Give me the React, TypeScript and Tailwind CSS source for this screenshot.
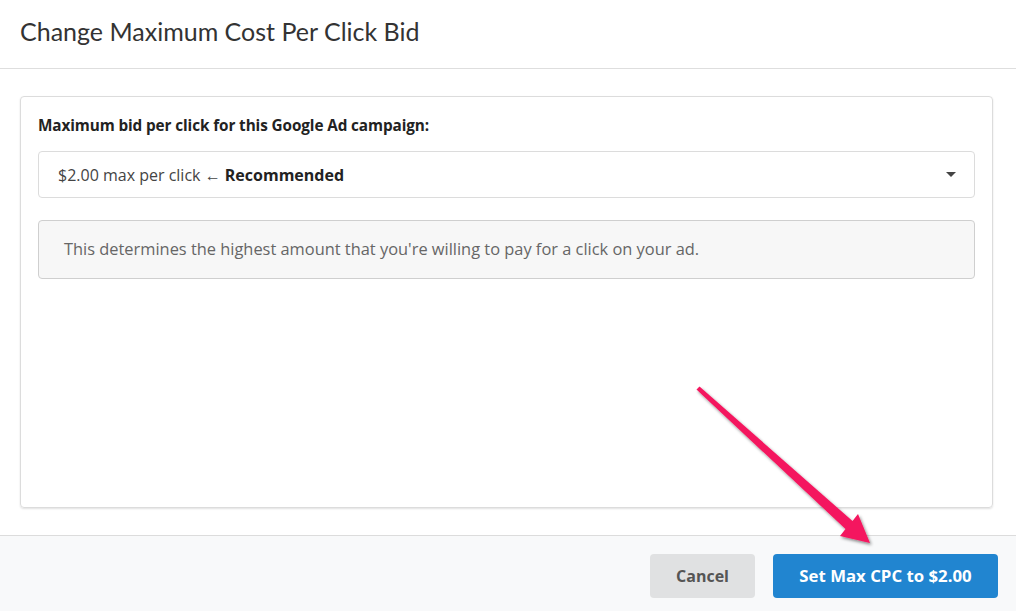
import React from "react";

export default function App() {
  return (
    <div className="relative w-[1016px] h-[611px] overflow-hidden bg-white flex flex-col" style={{ fontFamily: '"Open Sans", "Liberation Sans", sans-serif' }}>
      <div className="h-[69px] shrink-0 border-b border-[#dedede] flex items-center px-5 pb-[5px]">
        <h1 className="text-[25px] text-[#333] font-normal leading-none" style={{ fontFamily: 'Lato, "Liberation Sans", sans-serif' }}>
          Change Maximum Cost Per Click Bid
        </h1>
      </div>
      <div className="flex-1 pt-[27px] pb-[27px] pl-5 pr-[23px] flex">
        <div className="flex-1 border border-[#dcdcdc] rounded-[4px] shadow-[0_1px_2px_rgba(0,0,0,0.12)] px-[17px] pt-[18px]">
          <div className="text-[15.3px] font-bold text-[#222] leading-[20px] tracking-[-0.1px]">
            Maximum bid per click for this Google Ad campaign:
          </div>
          <div className="mt-[16px] h-[47px] border border-[#dcdcdc] rounded-[4px] flex items-center pl-[19px] pr-[18px]">
            <span className="text-[16px] text-[#444]">
              $2.00 max per click ← <span className="font-bold text-[#222]">Recommended</span>
            </span>
            <span className="ml-auto w-0 h-0 border-l-[5px] border-r-[5px] border-t-[5px] border-l-transparent border-r-transparent border-t-[#444]" />
          </div>
          <div className="mt-[22px] h-[59px] border border-[#cfcfcf] rounded-[4px] bg-[#f7f7f7] flex items-center pl-[25px]">
            <span className="text-[16.4px] text-[#666]">
              This determines the highest amount that you're willing to pay for a click on your ad.
            </span>
          </div>
        </div>
      </div>
      <div className="h-[76px] shrink-0 border-t border-[#dcdcdc] bg-[#f8f9fa] flex items-start justify-end gap-[18px] pt-[18px] pr-[18px]">
        <button className="h-[44px] w-[105px] rounded-[4px] bg-[#e0e1e2] text-[#555] text-[16px] font-bold">
          Cancel
        </button>
        <button className="h-[44px] w-[225px] rounded-[4px] bg-[#2185d0] text-white text-[16.8px] font-bold">
          Set Max CPC to $2.00
        </button>
      </div>
      <svg className="absolute left-0 top-0 pointer-events-none" width="1016" height="611" viewBox="0 0 1016 611">
        <defs>
          <filter id="sh" x="-20%" y="-20%" width="140%" height="140%">
            <feDropShadow dx="1.5" dy="2" stdDeviation="1.5" floodColor="#000" floodOpacity="0.45" />
          </filter>
        </defs>
        <polygon
          points="699.5,386.5 852.5,521 858,514 870,543 840,536 845.5,529 696.5,389.5"
          fill="#f4175e"
          filter="url(#sh)"
        />
      </svg>
    </div>
  );
}
